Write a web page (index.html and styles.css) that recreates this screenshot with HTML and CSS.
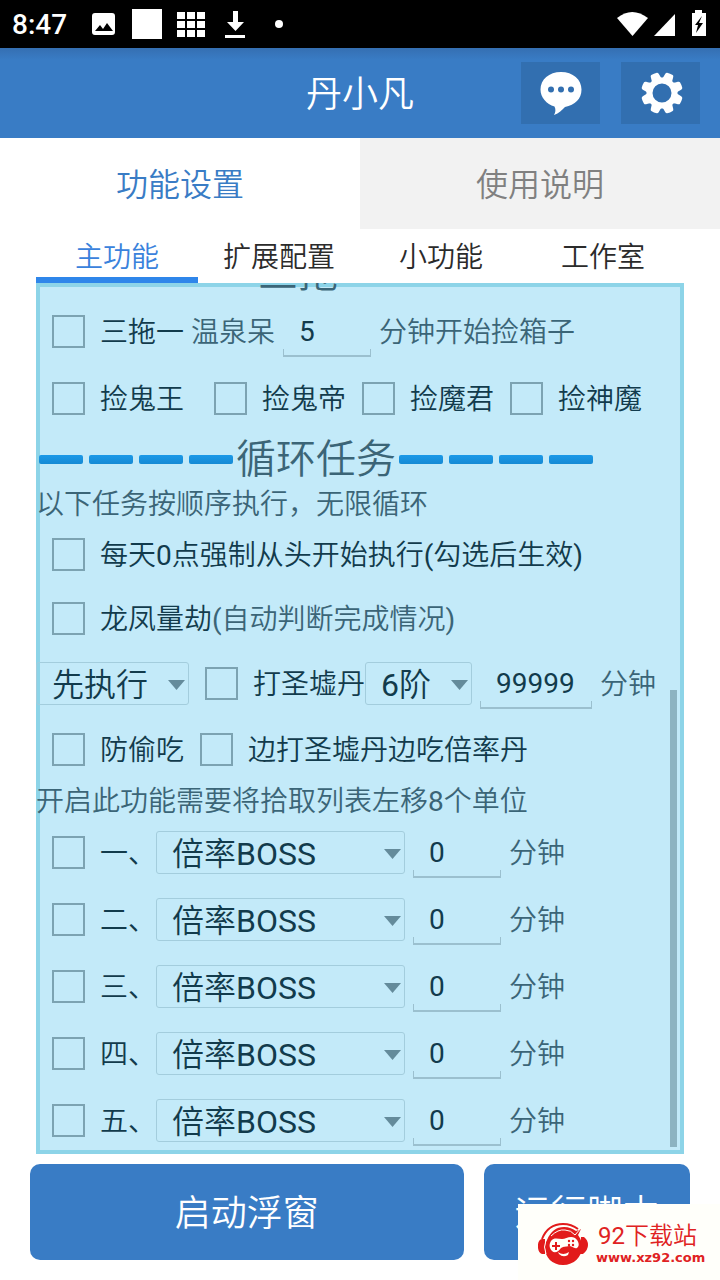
FILE: index.html
```html
<!DOCTYPE html>
<html lang="zh-CN">
<head>
    <meta charset="UTF-8">
    <meta name="viewport" content="width=device-width, initial-scale=1.0">
    <title>丹小凡</title>
    <link rel="stylesheet" href="styles.css">
</head>
<body>
    <div class="status-bar">
        <span class="time">8:47</span>
        <svg class="status-left" width="200" height="48" viewBox="0 0 200 48" fill="#fff">
            <path fill-rule="evenodd" d="M8 13h17a3 3 0 0 1 3 3v16a3 3 0 0 1-3 3H8a3 3 0 0 1-3-3V16a3 3 0 0 1 3-3zM8 31h18l-6-8-4 6-3-4z"/>
            <path d="M45 9h30v30H45z"/>
            <path d="M90 12h8v7h-8zM100 12h8v7h-8zM110 12h8v7h-8zM90 21h8v7h-8zM100 21h8v7h-8zM110 21h8v7h-8zM90 30h8v7h-8zM100 30h8v7h-8zM110 30h8v7h-8z"/>
            <path d="M146 11h5v11h6l-8.500 9-8.500-9h6zM138 35h20v3h-20z"/>
            <circle cx="192" cy="24" r="4"/>
        </svg>
        <svg class="status-right" width="92" height="48" viewBox="0 0 92 48" fill="#fff">
            <path d="M2 18q15-12 31 0L17.500 36z"/>
            <path d="M39 36h21V14z"/>
            <path fill-rule="evenodd" d="M80 10h7v3h4v23H77V13h3zM87 16l-7 9h3l-2 8 7-10h-4z"/>
        </svg>
    </div>

    <header class="header">
        <h1 class="title">丹小凡</h1>
        <div class="header-actions">
            <button class="icon-button" type="button" aria-label="消息">
                <svg width="44" height="46" viewBox="0 0 44 46">
                    <path fill="#fff" d="M22 2C10 2 1.500 9.500 1.500 19.500c0 8 6 14.500 14 17 1.500 3 1 6-.5 8.500 5-1.500 8-5 11-8C36 35 42.500 29 42.500 19.500 42.500 9.500 34 2 22 2z"/>
                    <g fill="#326fb0"><circle cx="12" cy="19.500" r="3"/><circle cx="22" cy="19.500" r="3"/><circle cx="32" cy="19.500" r="3"/></g>
                </svg>
            </button>
            <button class="icon-button" type="button" aria-label="设置">
                <svg width="44" height="44" viewBox="-23 -22 44 44">
                    <g fill="#fff" transform="rotate(22.500)">
                        <path id="tooth" d="M-6-12.500Q-4.500-15-4.300-19Q-4-20.500-3-20.700Q0-21.200 3-20.700Q4-20.500 4.300-19Q4.500-15 6-12.500z"/>
                        <use href="#tooth" transform="rotate(45)"/>
                        <use href="#tooth" transform="rotate(90)"/>
                        <use href="#tooth" transform="rotate(135)"/>
                        <use href="#tooth" transform="rotate(180)"/>
                        <use href="#tooth" transform="rotate(225)"/>
                        <use href="#tooth" transform="rotate(270)"/>
                        <use href="#tooth" transform="rotate(315)"/>
                    </g>
                    <circle r="12.500" fill="none" stroke="#fff" stroke-width="6"/>
                </svg>
            </button>
        </div>
    </header>

    <nav class="tabs">
        <button class="tab active" type="button">功能设置</button>
        <button class="tab" type="button">使用说明</button>
    </nav>
    <nav class="sub-tabs">
        <button class="sub-tab active" type="button">主功能</button>
        <button class="sub-tab" type="button">扩展配置</button>
        <button class="sub-tab" type="button">小功能</button>
        <button class="sub-tab" type="button">工作室</button>
    </nav>

    <main class="panel">
        <div class="section">
            <i class="dash"></i><i class="dash"></i><i class="dash"></i><i class="dash"></i>
            <h2 class="indent">三拖</h2>
        </div>
        <div class="row tall">
            <label class="check"><input type="checkbox">三拖一</label>
            <label class="hint before" for="wait">温泉呆</label>
            <input class="number" id="wait" type="text" value="5">
            <span class="hint">分钟开始捡箱子</span>
        </div>
        <div class="row tall">
            <label class="check wide"><input type="checkbox">捡鬼王</label>
            <label class="check"><input type="checkbox">捡鬼帝</label>
            <label class="check"><input type="checkbox">捡魔君</label>
            <label class="check"><input type="checkbox">捡神魔</label>
        </div>

        <div class="section">
            <i class="dash"></i><i class="dash"></i><i class="dash"></i><i class="dash"></i>
            <h2>循环任务</h2>
            <i class="dash"></i><i class="dash"></i><i class="dash"></i><i class="dash"></i>
        </div>
        <p class="note">以下任务按顺序执行，无限循环</p>
        <div class="row">
            <label class="check"><input type="checkbox">每天0点强制从头开始执行(勾选后生效)</label>
        </div>
        <div class="row">
            <label class="check"><input type="checkbox">龙凤量劫</label>
            <span class="hint">(自动判断完成情况)</span>
        </div>
        <div class="row tall">
            <span class="select order"><select aria-label="执行顺序"><option>先执行</option></select></span>
            <label class="check"><input type="checkbox">打圣墟丹</label>
            <span class="select level"><select aria-label="阶数"><option>6阶</option></select></span>
            <input class="number long" type="text" value="99999" aria-label="打圣墟丹分钟">
            <span class="hint">分钟</span>
        </div>
        <div class="row">
            <label class="check"><input type="checkbox">防偷吃</label>
            <label class="check"><input type="checkbox">边打圣墟丹边吃倍率丹</label>
        </div>
        <p class="note">开启此功能需要将拾取列表左移8个单位</p>
        <div class="row tall">
            <label class="check"><input type="checkbox">一、</label>
            <span class="select boss"><select aria-label="任务一"><option>倍率BOSS</option></select></span>
            <input class="number" type="text" value="0" aria-label="任务一分钟">
            <span class="hint">分钟</span>
        </div>
        <div class="row tall">
            <label class="check"><input type="checkbox">二、</label>
            <span class="select boss"><select aria-label="任务二"><option>倍率BOSS</option></select></span>
            <input class="number" type="text" value="0" aria-label="任务二分钟">
            <span class="hint">分钟</span>
        </div>
        <div class="row tall">
            <label class="check"><input type="checkbox">三、</label>
            <span class="select boss"><select aria-label="任务三"><option>倍率BOSS</option></select></span>
            <input class="number" type="text" value="0" aria-label="任务三分钟">
            <span class="hint">分钟</span>
        </div>
        <div class="row tall">
            <label class="check"><input type="checkbox">四、</label>
            <span class="select boss"><select aria-label="任务四"><option>倍率BOSS</option></select></span>
            <input class="number" type="text" value="0" aria-label="任务四分钟">
            <span class="hint">分钟</span>
        </div>
        <div class="row tall">
            <label class="check"><input type="checkbox">五、</label>
            <span class="select boss"><select aria-label="任务五"><option>倍率BOSS</option></select></span>
            <input class="number" type="text" value="0" aria-label="任务五分钟">
            <span class="hint">分钟</span>
        </div>
        <div class="scroll-thumb"></div>
    </main>

    <footer class="footer">
        <button class="action" type="button">启动浮窗</button>
        <button class="action" type="button">运行脚本</button>
    </footer>

    <div class="badge">
        <svg width="50" height="44" viewBox="0 0 50 44">
            <path d="M4 17C8 7 15 2 25 2c6 0 11 2 15 5" fill="none" stroke="#e21b1b" stroke-width="2"/>
            <path fill="#e21b1b" d="M9 18C13 9 18 5 26 5c5 0 9 2 12 4l5-2-3 6c3 4 4 8 4 12 0 10-8 18-19 18S7 35 7 26c0-3 0-5 2-8z"/>
            <path fill="#e21b1b" d="M4 17h3v15H4c-5-1-6-14 0-15zM43 15h3q4 3 4 8t-5 9h-3z"/>
            <path d="M8 18q-3 7 0 14M13 14Q20 7 27 8q6 0 10 5l6-7" fill="none" stroke="#fffffa" stroke-width="1"/>
            <path fill="#fffffa" d="M13 19c3-4 7-2 11-2s8-4 13-1c4 3 5 8 2 10-3 1-5-2-8-2-3 1-5 0-8 2-2 3-6 6-9 3-3-3-3-7-1-10z"/>
            <path d="M18 20v8M14 24h8" stroke="#e21b1b" stroke-width="2"/>
            <g fill="#e21b1b"><circle cx="31" cy="19" r="1.200"/><circle cx="35" cy="19" r="1.200"/><circle cx="31" cy="23" r="1.200"/><circle cx="35" cy="23" r="1.200"/></g>
            <path d="M20 30q5 4 11 0l-1 3q-5 3-9-1" fill="#fffffa"/>
        </svg>
        <div>
            <div class="badge-name">92下载站</div>
            <div class="badge-url">www.xz92.com</div>
        </div>
    </div>
</body>
</html>
```
FILE: styles.css
```css
* {
    box-sizing: border-box;
}
body {
    display: flex;
    flex-direction: column;
    height: 100vh;
    margin: 0;
    overflow: hidden;
    background-color: #fff;
    font-family: Roboto, "Noto Sans CJK SC DemiLight", "Noto Sans CJK SC", sans-serif;
    font-size: 28px;
}
button, input, select {
    border: 0;
    border-radius: 0;
    font-family: inherit;
    color: inherit;
}
h1, h2, p {
    margin: 0;
    font-weight: normal;
}
.status-bar {
    display: flex;
    flex: none;
    align-items: center;
    height: 48px;
    padding-left: 12px;
    background-color: #000;
    color: #fff;
}
.time {
    width: 75px;
    font-weight: 500;
}
.status-right {
    margin-left: auto;
    margin-right: 13px;
}

/* header */
.header {
    display: grid;
    flex: none;
    grid-template-columns: 1fr auto 1fr;
    align-items: center;
    height: 90px;
    padding: 0 20px;
    background: linear-gradient(#356fb2, #397cc5 12px);
    color: #fff;
}
.title {
    grid-column: 2;
    padding-bottom: 4px;
    font-size: 36px;
}
.header-actions {
    display: flex;
    justify-content: flex-end;
    gap: 21px;
}
.icon-button {
    display: flex;
    align-items: center;
    justify-content: center;
    width: 79px;
    height: 62px;
    padding: 0;
    background-color: #326fb0;
}

/* tabs */
.tabs, .sub-tabs {
    display: flex;
    flex: none;
}
.tab {
    flex: 1;
    height: 91px;
    padding: 0 0 4px;
    background-color: #f2f2f2;
    color: #808080;
    font-size: 32px;
}
.tab.active {
    background-color: #fff;
    color: #397cc5;
}
.sub-tabs {
    padding: 0 36px;
}
.sub-tab {
    flex: 1;
    height: 54px;
    padding: 0 0 3px;
    background-color: #fff;
    color: #2b2b2b;
    font-size: 28px;
}
.sub-tab.active {
    box-shadow: inset 0 -6px #2f86ea;
    color: #3a82dc;
}

/* settings list, kept at its last rows */
.panel {
    position: relative;
    display: flex;
    flex: 1;
    flex-direction: column;
    justify-content: flex-end;
    min-height: 0;
    margin: 0 36px;
    overflow: hidden;
    background-color: #c3eaf9;
    box-shadow: inset 0 0 0 4px #8dd4e8;
    color: #123b4c;
    white-space: nowrap;
}
.row, .section {
    display: flex;
    flex: none;
    align-items: center;
}
.row {
    height: 64px;
}
.row.tall {
    height: 67px;
}
.section {
    height: 52px;
    padding-top: 2px;
    color: #3b6577;
}
.section h2 {
    padding-top: 2px;
    font-size: 40px;
    line-height: 48px;
}
.section .indent {
    padding-left: 22px;
}
.dash {
    width: 44px;
    height: 9px;
    margin: 0 3px;
    border-radius: 2px;
    background: linear-gradient(#1b99e8, #168ad4);
}
.note {
    flex: none;
    padding-top: 4px;
    line-height: 34px;
}
.note, .hint {
    color: #3b6577;
}
.check, .hint {
    padding-bottom: 3px;
}
.hint.before {
    padding-left: 7px;
}
.check {
    display: flex;
    align-items: center;
    gap: 15px;
    padding-left: 16px;
}
.check.wide {
    padding-right: 14px;
}
.check input {
    width: 33px;
    height: 33px;
    margin: 3px 0 0;
    appearance: none;
    border: 2px solid #7ca3b2;
}
.check input:checked {
    background-color: #7ca3b2;
}
.number {
    width: 88px;
    height: 50px;
    margin: 0 8px;
    padding: 0 16px;
    background:
        linear-gradient(#9bc0cf, #9bc0cf) bottom / 100% 2px no-repeat,
        linear-gradient(#9bc0cf, #9bc0cf) left bottom / 1px 8px no-repeat,
        linear-gradient(#9bc0cf, #9bc0cf) right bottom / 1px 8px no-repeat;
    font-size: 28px;
}
.number.long {
    width: 112px;
}
.select {
    position: relative;
}
.select::after {
    content: "";
    position: absolute;
    top: 18px;
    right: 4px;
    width: 17px;
    height: 10px;
    background-color: #648b9b;
    clip-path: polygon(0 0, 100% 0, 50% 100%);
    pointer-events: none;
}
.select select {
    display: block;
    width: 100%;
    height: 43px;
    padding: 2px 15px 0;
    appearance: none;
    border: 1px solid #a3cddd;
    border-radius: 3px;
    background-color: transparent;
    font-size: 32px;
}
.order {
    width: 153px;
}
.level {
    width: 107px;
}
.boss {
    width: 249px;
}
.scroll-thumb {
    position: absolute;
    right: 7px;
    bottom: 7px;
    width: 7px;
    height: 52.5%;
    background-color: #8db3c1;
}

/* bottom buttons */
.footer {
    display: grid;
    flex: none;
    grid-template-columns: 2.1fr 1fr;
    gap: 20px;
    padding: 10px 30px 20px;
}
.action {
    height: 96px;
    padding: 0 0 4px;
    border-radius: 10px;
    background-color: #397cc5;
    color: #fff;
    font-size: 36px;
}
.badge {
    position: absolute;
    right: 0;
    bottom: 0;
    display: flex;
    align-items: center;
    gap: 8px;
    width: 202px;
    height: 76px;
    padding: 4px 0 0 20px;
    background-color: #fffffa;
    color: #e02222;
}
.badge-name {
    padding-left: 2px;
    font-size: 24px;
    line-height: 28px;
}
.badge-url {
    font-family: "DejaVu Sans", sans-serif;
    font-size: 13px;
    font-weight: bold;
    line-height: 16px;
}
```
